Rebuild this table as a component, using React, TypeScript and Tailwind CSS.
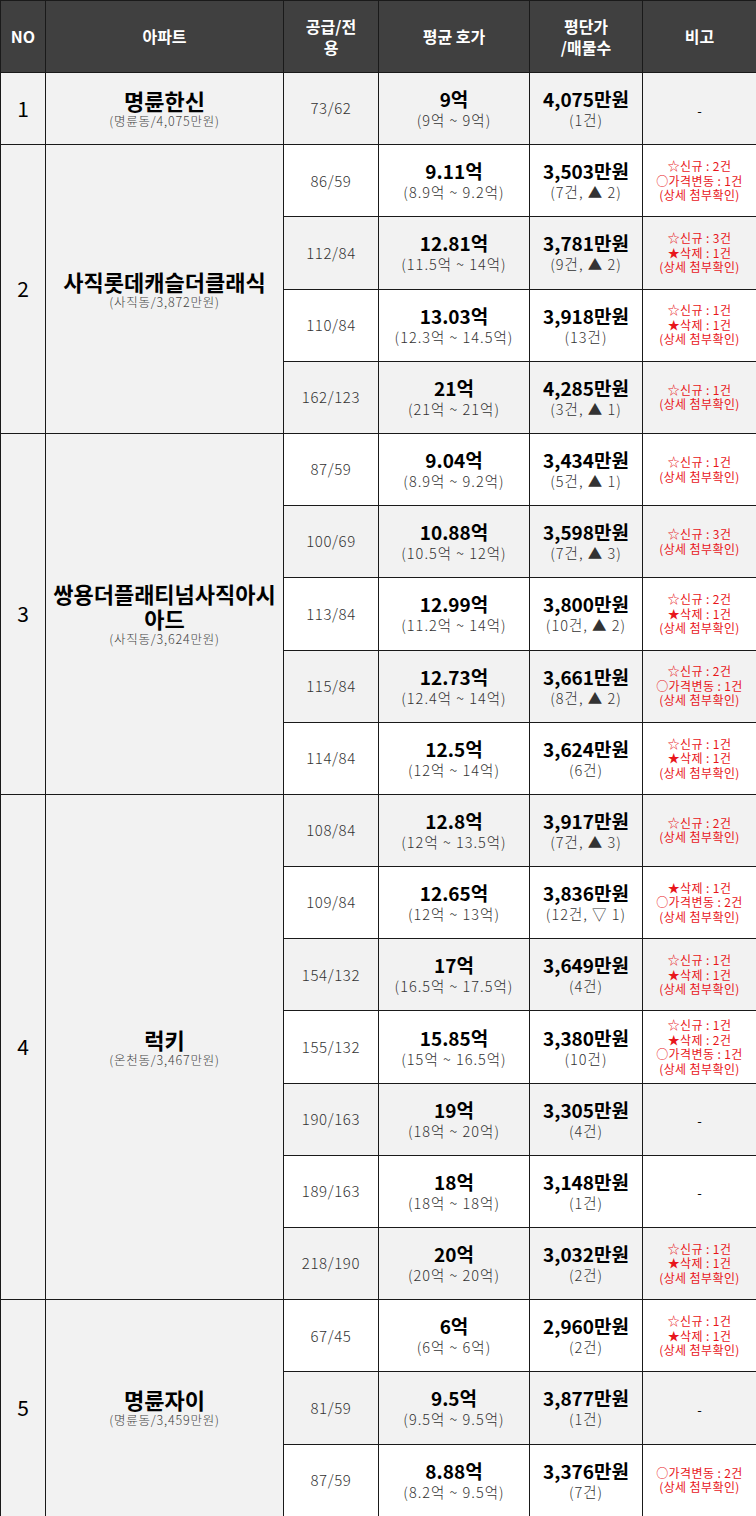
import React from 'react';

type Sub = {
  size: string;
  price: string;
  range: string;
  unit: string;
  count: string;
  notes: string[];
};

type Apt = { no: number; name: string; dong: string; rows: Sub[] };

const D = '(상세 첨부확인)';

const apts: Apt[] = [
  {
    no: 1,
    name: '명륜한신',
    dong: '(명륜동/4,075만원)',
    rows: [{ size: '73/62', price: '9억', range: '(9억 ~ 9억)', unit: '4,075만원', count: '(1건)', notes: ['-'] }],
  },
  {
    no: 2,
    name: '사직롯데캐슬더클래식',
    dong: '(사직동/3,872만원)',
    rows: [
      { size: '86/59', price: '9.11억', range: '(8.9억 ~ 9.2억)', unit: '3,503만원', count: '(7건, ▲ 2)', notes: ['☆신규 : 2건', '○가격변동 : 1건', D] },
      { size: '112/84', price: '12.81억', range: '(11.5억 ~ 14억)', unit: '3,781만원', count: '(9건, ▲ 2)', notes: ['☆신규 : 3건', '★삭제 : 1건', D] },
      { size: '110/84', price: '13.03억', range: '(12.3억 ~ 14.5억)', unit: '3,918만원', count: '(13건)', notes: ['☆신규 : 1건', '★삭제 : 1건', D] },
      { size: '162/123', price: '21억', range: '(21억 ~ 21억)', unit: '4,285만원', count: '(3건, ▲ 1)', notes: ['☆신규 : 1건', D] },
    ],
  },
  {
    no: 3,
    name: '쌍용더플래티넘사직아시아드',
    dong: '(사직동/3,624만원)',
    rows: [
      { size: '87/59', price: '9.04억', range: '(8.9억 ~ 9.2억)', unit: '3,434만원', count: '(5건, ▲ 1)', notes: ['☆신규 : 1건', D] },
      { size: '100/69', price: '10.88억', range: '(10.5억 ~ 12억)', unit: '3,598만원', count: '(7건, ▲ 3)', notes: ['☆신규 : 3건', D] },
      { size: '113/84', price: '12.99억', range: '(11.2억 ~ 14억)', unit: '3,800만원', count: '(10건, ▲ 2)', notes: ['☆신규 : 2건', '★삭제 : 1건', D] },
      { size: '115/84', price: '12.73억', range: '(12.4억 ~ 14억)', unit: '3,661만원', count: '(8건, ▲ 2)', notes: ['☆신규 : 2건', '○가격변동 : 1건', D] },
      { size: '114/84', price: '12.5억', range: '(12억 ~ 14억)', unit: '3,624만원', count: '(6건)', notes: ['☆신규 : 1건', '★삭제 : 1건', D] },
    ],
  },
  {
    no: 4,
    name: '럭키',
    dong: '(온천동/3,467만원)',
    rows: [
      { size: '108/84', price: '12.8억', range: '(12억 ~ 13.5억)', unit: '3,917만원', count: '(7건, ▲ 3)', notes: ['☆신규 : 2건', D] },
      { size: '109/84', price: '12.65억', range: '(12억 ~ 13억)', unit: '3,836만원', count: '(12건, ▽ 1)', notes: ['★삭제 : 1건', '○가격변동 : 2건', D] },
      { size: '154/132', price: '17억', range: '(16.5억 ~ 17.5억)', unit: '3,649만원', count: '(4건)', notes: ['☆신규 : 1건', '★삭제 : 1건', D] },
      { size: '155/132', price: '15.85억', range: '(15억 ~ 16.5억)', unit: '3,380만원', count: '(10건)', notes: ['☆신규 : 1건', '★삭제 : 2건', '○가격변동 : 1건', D] },
      { size: '190/163', price: '19억', range: '(18억 ~ 20억)', unit: '3,305만원', count: '(4건)', notes: ['-'] },
      { size: '189/163', price: '18억', range: '(18억 ~ 18억)', unit: '3,148만원', count: '(1건)', notes: ['-'] },
      { size: '218/190', price: '20억', range: '(20억 ~ 20억)', unit: '3,032만원', count: '(2건)', notes: ['☆신규 : 1건', '★삭제 : 1건', D] },
    ],
  },
  {
    no: 5,
    name: '명륜자이',
    dong: '(명륜동/3,459만원)',
    rows: [
      { size: '67/45', price: '6억', range: '(6억 ~ 6억)', unit: '2,960만원', count: '(2건)', notes: ['☆신규 : 1건', '★삭제 : 1건', D] },
      { size: '81/59', price: '9.5억', range: '(9.5억 ~ 9.5억)', unit: '3,877만원', count: '(1건)', notes: ['-'] },
      { size: '87/59', price: '8.88억', range: '(8.2억 ~ 9.5억)', unit: '3,376만원', count: '(7건)', notes: ['○가격변동 : 2건', D] },
    ],
  },
];

const cell = 'border border-[#1a1a1a] text-center align-middle p-0';

function Notes({ notes }: { notes: string[] }) {
  if (notes.length === 1 && notes[0] === '-') {
    return <span className="text-[13px] text-black">-</span>;
  }
  return (
    <div className="flex flex-col items-center text-[12px] leading-[14.5px] tracking-[0.4px] text-[#e8161b]">
      {notes.map((n, i) => (
        <span key={i}>{n}</span>
      ))}
    </div>
  );
}

export default function App() {
  let idx = 0;
  return (
    <div className="w-[756px] bg-white font-['Noto_Sans_CJK_KR','Noto_Sans',sans-serif]">
      <table className="w-[756px] table-fixed border-collapse">
        <colgroup>
          <col className="w-[45px]" />
          <col className="w-[238px]" />
          <col className="w-[95px]" />
          <col className="w-[151px]" />
          <col className="w-[113px]" />
          <col className="w-[114px]" />
        </colgroup>
        <thead>
          <tr className="h-[72px] bg-[#404040] text-[16px] font-bold leading-[21px] text-white">
            <th className={cell}>NO</th>
            <th className={cell}>아파트</th>
            <th className={cell}>
              공급/전
              <br />용
            </th>
            <th className={cell}>평균 호가</th>
            <th className={cell}>
              평단가
              <br />
              /매물수
            </th>
            <th className={cell}>비고</th>
          </tr>
        </thead>
        <tbody>
          {apts.map((a) =>
            a.rows.map((r, i) => {
              const gray = idx % 2 === 0;
              idx++;
              const bg = gray ? 'bg-[#f2f2f2]' : 'bg-white';
              return (
                <tr key={`${a.no}-${i}`} className="h-[72.2px]">
                  {i === 0 && (
                    <>
                      <td rowSpan={a.rows.length} className={`${cell} bg-[#f2f2f2] text-[21px] text-black`}>
                        {a.no}
                      </td>
                      <td rowSpan={a.rows.length} className={`${cell} bg-[#f2f2f2] px-[2px]`}>
                        <div className="text-[22px] font-bold leading-[25px] text-black">{a.name}</div>
                        <div className="text-[12.5px] font-light leading-[16px] tracking-[0.8px] text-[#444]">{a.dong}</div>
                      </td>
                    </>
                  )}
                  <td className={`${cell} ${bg} text-[15px] font-light tracking-[0.6px] text-[#333]`}>{r.size}</td>
                  <td className={`${cell} ${bg}`}>
                    <div className="text-[19px] font-bold leading-[22px] text-black">{r.price}</div>
                    <div className="text-[14.5px] font-light leading-[19px] tracking-[1px] text-[#333]">{r.range}</div>
                  </td>
                  <td className={`${cell} ${bg}`}>
                    <div className="text-[19px] font-bold leading-[22px] text-black">{r.unit}</div>
                    <div className="text-[14.5px] font-light leading-[19px] tracking-[1px] text-[#333]">{r.count}</div>
                  </td>
                  <td className={`${cell} ${bg}`}>
                    <Notes notes={r.notes} />
                  </td>
                </tr>
              );
            })
          )}
        </tbody>
      </table>
    </div>
  );
}
